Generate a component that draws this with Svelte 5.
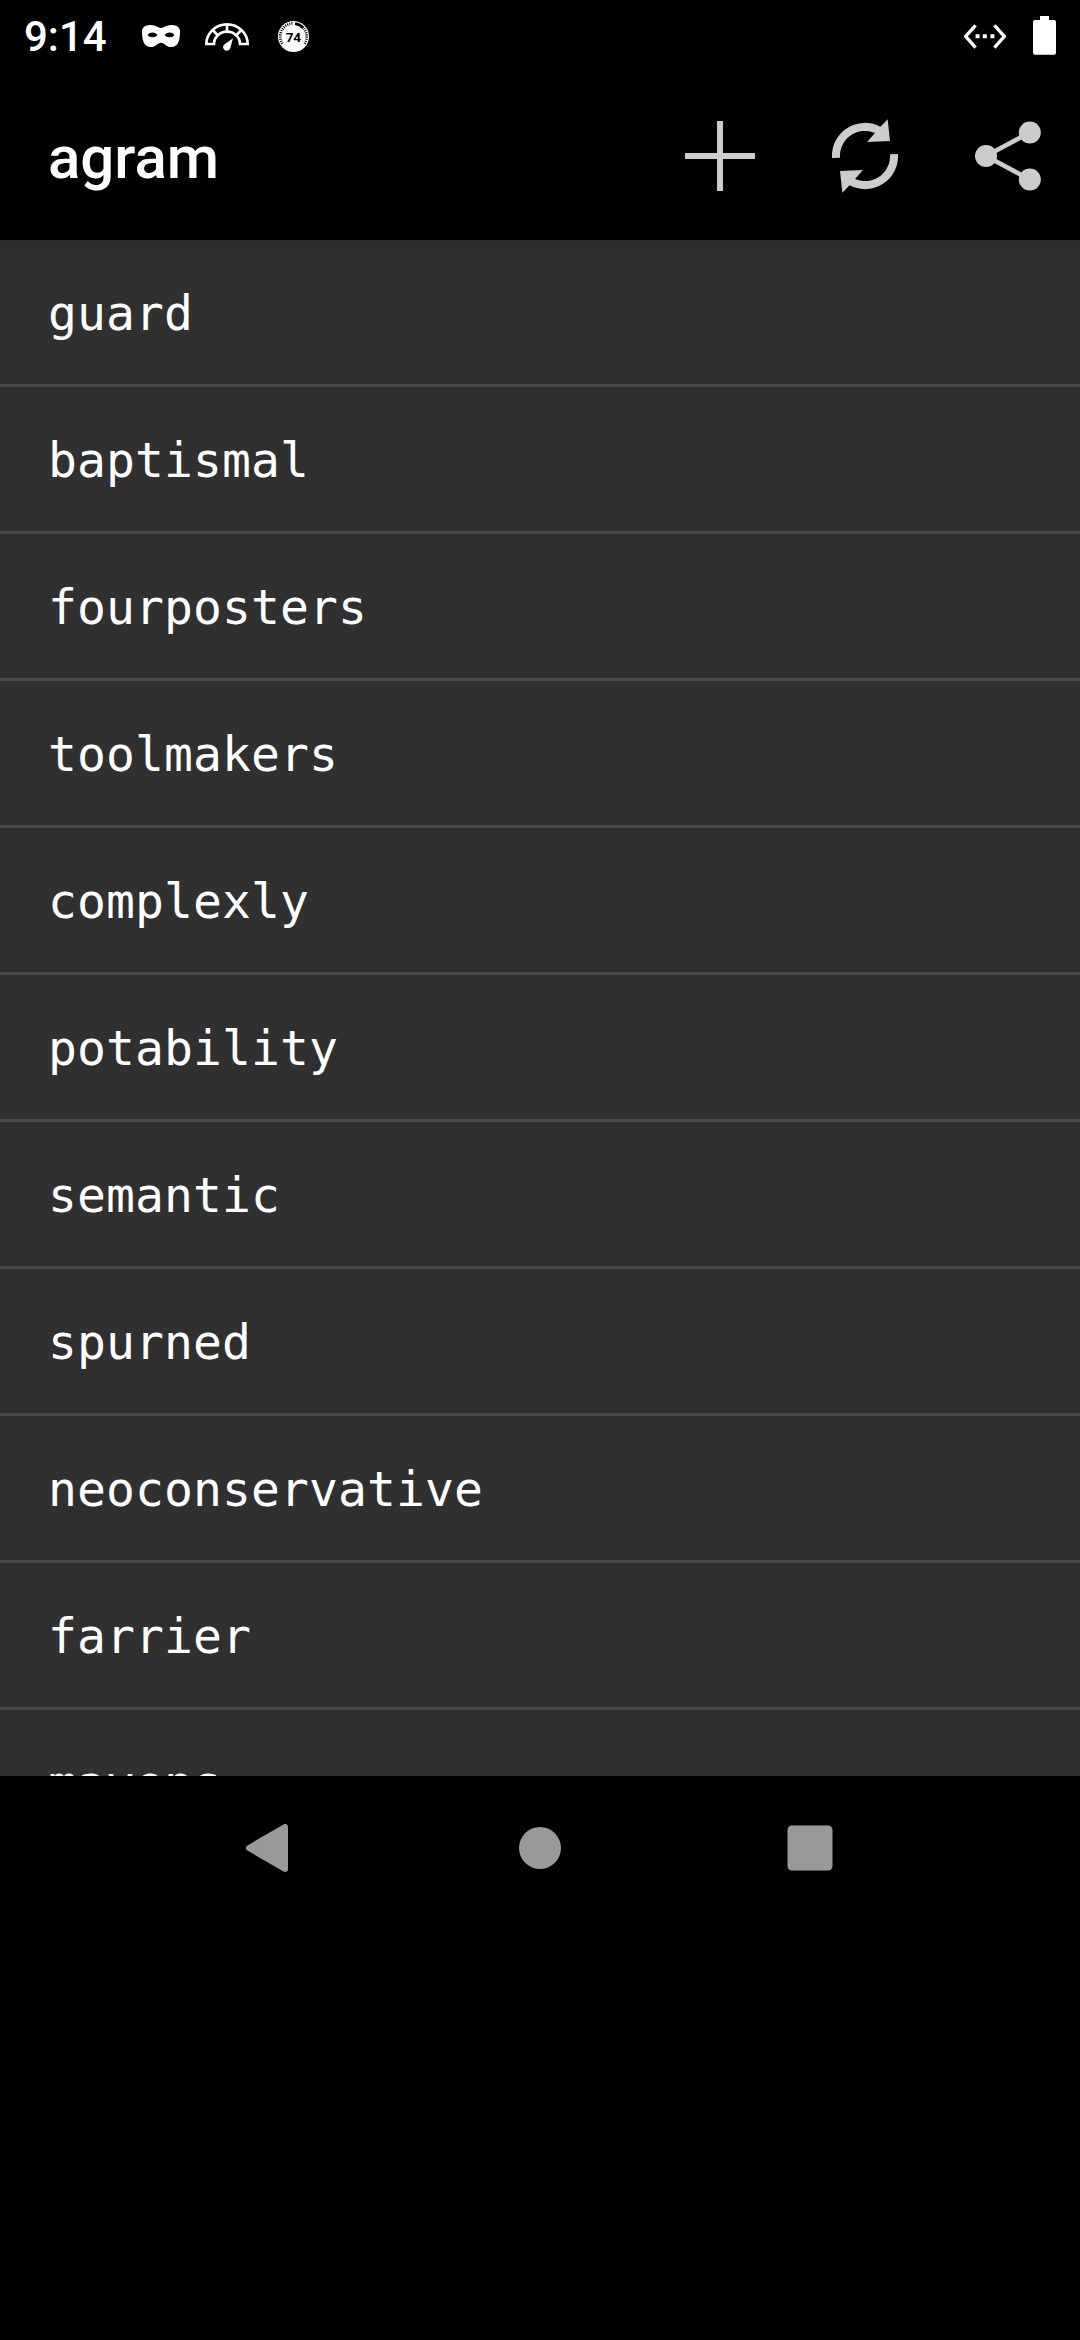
<script>
  const words = [
    'guard', 'baptismal', 'fourposters', 'toolmakers', 'complexly', 'potability',
    'semantic', 'spurned', 'neoconservative', 'farrier', 'mavens'
  ];
</script>

<div class="screen">
  <header class="status">
    <span class="clock">9:14</span>
    <svg class="mask" viewBox="426 60 114 96" aria-hidden="true">
      <path fill="#fff" fill-rule="evenodd" d="M426 94C426 81 437 75 452 75C468 75 474 84 483 84C492 84 498 75 514 75C529 75 540 81 540 94C540 106 539 118 535 127C531 137 524 141 513 141C499 141 493 128 483 128C473 128 467 141 453 141C442 141 435 137 431 127C427 118 426 106 426 94ZM443 105C448 114 467 114 472 105C466 95 449 95 443 105ZM494 105C499 114 518 114 523 105C517 95 500 95 494 105Z" />
    </svg>
    <svg class="gauge" viewBox="615 60 132 96" aria-hidden="true">
      <g fill="none" stroke="#fff" stroke-width="8">
        <path d="M619 132A62 59 0 0 1 743 132H720A39 37 0 0 0 642 132Z" />
        <path d="M681 74V96M638 90L654 107M724 90L708 107" />
      </g>
      <path fill="#fff" d="M699 115L691 144C688 154 673 155 670 145C668 139 670 136 674 133Z" />
    </svg>
    <svg class="badge" viewBox="834 60 93 96" aria-hidden="true">
      <circle cx="880.5" cy="109.500" r="46.500" fill="#fff" />
      <path d="M847 131A39.500 39.500 0 0 1 880 70" fill="none" stroke="#000" stroke-width="8" stroke-dasharray="3 3.500" />
      <path d="M914 131A39.500 39.500 0 0 0 912 86" fill="none" stroke="#000" stroke-width="8" stroke-dasharray="3 3.500" />
      <path d="M885 71A39 39 0 0 1 910 84" fill="none" stroke="#000" stroke-width="8" />
      <text x="880" y="125" text-anchor="middle">74</text>
    </svg>
    <span class="fill"></span>
    <svg class="ethernet" viewBox="71 60 127 96" aria-hidden="true">
      <path d="M106 76L76 109L106 143M163 76L193 109L163 143" fill="none" stroke="#fff" stroke-width="10" />
      <path d="M106 103h12v12h-12zM128 103h12v12h-12zM151 103h12v12h-12z" fill="#fff" />
    </svg>
    <svg class="battery" viewBox="279 48 69 117" aria-hidden="true">
      <path fill="#fff" d="M300 48h27v12h15q6 0 6 6v92q0 6-6 6h-57q-6 0-6-6v-92q0-6 6-6h15z" />
    </svg>
  </header>

  <div class="appbar">
    <h1>agram</h1>
    <button aria-label="Add">
      <svg viewBox="-36 -54 432 504"><path d="M171 93h18v96h96v18h-96v96h-18v-96h-96v-18h96z" /></svg>
    </button>
    <button aria-label="Refresh">
      <svg viewBox="396 -54 432 504">
        <path d="M516 204A99 99 0 0 1 661 110L683 88L690 153L621 156L645 129A75 75 0 0 0 540 203Z" />
        <path transform="rotate(180 615 198)" d="M516 204A99 99 0 0 1 661 110L683 88L690 153L621 156L645 129A75 75 0 0 0 540 203Z" />
      </svg>
    </button>
    <button aria-label="Share">
      <svg viewBox="828 -54 432 504">
        <path d="M1109.500 127.500L978 198L1109.500 268.500" class="link" />
        <circle cx="978" cy="198" r="33" /><circle cx="1109.500" cy="127.500" r="33" /><circle cx="1109.500" cy="268.500" r="33" />
      </svg>
    </button>
  </div>

  <ul class="words">
    {#each words as word}
      <li>{word}</li>
    {/each}
  </ul>

  <nav>
    <svg viewBox="0 0 270 144"><path d="M114 72L150 51V93Z" stroke="#999" stroke-width="6" stroke-linejoin="round" /></svg>
    <svg viewBox="0 0 270 144"><circle cx="135" cy="72" r="21" /></svg>
    <svg viewBox="0 0 270 144"><rect x="112.500" y="49.500" width="45" height="45" rx="4.500" /></svg>
  </nav>
</div>

<style>
  :global(body) { background: #000; }
  .screen { width: 1080px; height: 2340px; background: #000; color: #fff; font-family: Roboto, sans-serif; overflow: hidden; }
  .status { display: flex; align-items: center; height: 72px; padding: 0 24px; box-sizing: border-box; }
  .status svg { height: 32px; flex: none; }
  .clock { width: 118px; font-size: 42px; font-weight: 500; line-height: 48px; padding-top: 2px; box-sizing: border-box; }
  .mask { width: 38px; margin-right: 25px; }
  .gauge { width: 44px; margin-right: 29px; }
  .badge { width: 31px; }
  .badge text { font: 700 41px Roboto, sans-serif; letter-spacing: -1px; fill: #000; }
  .fill { flex: 1; }
  .ethernet { width: 42px; margin-right: 27px; }
  .status .battery { width: 23px; height: 39px; margin-bottom: 1px; }
  .appbar { display: flex; align-items: center; height: 168px; }
  h1 { flex: 1; margin: 0; padding: 3px 0 0 48px; font-size: 60px; font-weight: 500; line-height: 70px; }
  button { width: 144px; height: 168px; padding: 0; border: 0; background: none; }
  button svg { display: block; width: 144px; height: 168px; fill: #ccc; }
  .link { fill: none; stroke: #ccc; stroke-width: 14; }
  .words { height: 1536px; margin: 0; padding: 0; overflow: hidden; list-style: none; background: linear-gradient(#2b2b2b, #303030 16px); }
  li { height: 142px; padding: 2px 48px 0; line-height: 142px; border-bottom: 3px solid #4a4a4a; font-family: "DejaVu Sans Mono", monospace; font-size: 48px; letter-spacing: 0.1px; }
  nav { display: flex; justify-content: center; height: 144px; }
  nav svg { width: 270px; height: 144px; fill: #999; }
</style>
